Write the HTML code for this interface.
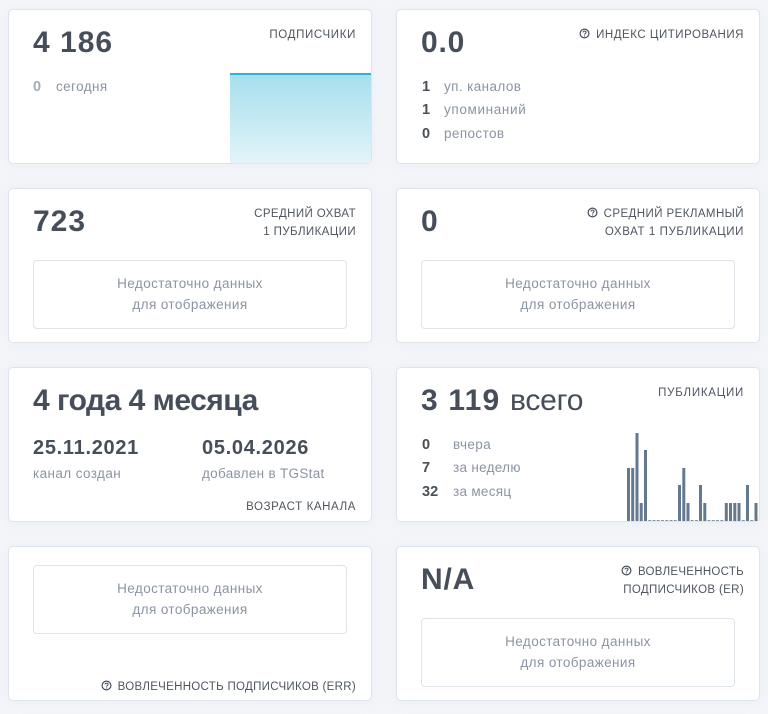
<!DOCTYPE html>
<html lang="ru"><head><meta charset="utf-8"><title>Статистика канала</title>
<style>
html,body{margin:0;padding:0;width:768px;height:714px;overflow:hidden;background:#f3f5f9}
body{position:relative;font-family:"Liberation Sans","DejaVu Sans",sans-serif;color:#495057}
.card{position:absolute;width:362px;height:153px;background:#fff;border:1px solid #dfe3ea;border-radius:5px;box-shadow:0 1px 12px rgba(200,208,225,.18)}
.t{position:absolute;white-space:nowrap;line-height:20px}
.big{font-size:30px;font-weight:700;line-height:36px;color:#464e59;letter-spacing:1px}
.lb{font-size:11.5px;color:#4f565f;letter-spacing:.5px;text-align:right;height:20px}
.n{font-size:14.5px;font-weight:700;color:#495057}
.g{font-size:13.5px;color:#8b94a3;letter-spacing:.4px}
.box{position:absolute;width:312px;height:67px;border:1px solid #dfe3ea;border-radius:4px;background:#fff;color:#8b94a3;font-size:13.5px;letter-spacing:.4px;line-height:21px;text-align:center}
.box div{position:relative;top:12px}
.q{position:absolute;width:11px;height:11px}
</style></head><body>

<div class="card" style="left:8px;top:9px"></div>
<div class="card" style="left:396px;top:9px"></div>
<div class="card" style="left:8px;top:188px"></div>
<div class="card" style="left:396px;top:188px"></div>
<div class="card" style="left:8px;top:367px"></div>
<div class="card" style="left:396px;top:367px"></div>
<div class="card" style="left:8px;top:546px"></div>
<div class="card" style="left:396px;top:546px"></div>

<!-- Card 1 -->
<div class="t big" style="left:33px;top:25px">4 186</div>
<div class="t lb" style="right:412px;top:25px;letter-spacing:.65px">ПОДПИСЧИКИ</div>
<div class="t n" style="left:33px;top:77px;color:#a3adb8">0</div>
<div class="t g" style="left:56px;top:77px">сегодня</div>
<div style="position:absolute;left:230px;top:73px;width:141px;height:90px;background:linear-gradient(#a6deed,#e2f4f9);border-bottom-right-radius:4px"><div style="height:2px;background:#2bb3d8"></div></div>

<!-- Card 2 -->
<div class="t big" style="left:421px;top:25px;letter-spacing:.8px">0.0</div>
<svg class="q" style="left:579px;top:28px" viewBox="0 0 11 11"><circle cx="5.5" cy="5.5" r="4.4" fill="none" stroke="#464e59" stroke-width="1.2"/><path d="M4 4.4c.2-1.8 3.1-1.7 3.1 0 0 1-1.5 1.1-1.5 2.2" fill="none" stroke="#464e59" stroke-width="1"/><circle cx="5.6" cy="8" r=".6" fill="#464e59"/></svg>
<div class="t lb" style="right:24px;top:25px;letter-spacing:.53px">ИНДЕКС ЦИТИРОВАНИЯ</div>
<div class="t n" style="left:422px;top:77px">1</div><div class="t g" style="left:444px;top:77px">уп. каналов</div>
<div class="t n" style="left:422px;top:100px">1</div><div class="t g" style="left:444px;top:100px;letter-spacing:.65px">упоминаний</div>
<div class="t n" style="left:422px;top:124px">0</div><div class="t g" style="left:444px;top:124px">репостов</div>

<!-- Card 3 -->
<div class="t big" style="left:33px;top:204px">723</div>
<div class="t lb" style="right:412px;top:204px;letter-spacing:.4px">СРЕДНИЙ ОХВАТ</div>
<div class="t lb" style="right:412px;top:222px;letter-spacing:.4px">1 ПУБЛИКАЦИИ</div>
<div class="box" style="left:33px;top:260px"><div>Недостаточно данных<br>для отображения</div></div>

<!-- Card 4 -->
<div class="t big" style="left:421px;top:204px">0</div>
<svg class="q" style="left:587px;top:207px" viewBox="0 0 11 11"><circle cx="5.5" cy="5.5" r="4.4" fill="none" stroke="#464e59" stroke-width="1.2"/><path d="M4 4.4c.2-1.8 3.1-1.7 3.1 0 0 1-1.5 1.1-1.5 2.2" fill="none" stroke="#464e59" stroke-width="1"/><circle cx="5.6" cy="8" r=".6" fill="#464e59"/></svg>
<div class="t lb" style="right:24px;top:204px;letter-spacing:.43px">СРЕДНИЙ РЕКЛАМНЫЙ</div>
<div class="t lb" style="right:24px;top:222px;letter-spacing:.6px">ОХВАТ 1 ПУБЛИКАЦИИ</div>
<div class="box" style="left:421px;top:260px"><div>Недостаточно данных<br>для отображения</div></div>

<!-- Card 5 -->
<div class="t big" style="left:33px;top:383px;letter-spacing:-.5px">4 года 4 месяца</div>
<div class="t" style="left:33px;top:438px;font-size:20px;font-weight:700;color:#464e59;letter-spacing:.7px">25.11.2021</div>
<div class="t" style="left:202px;top:438px;font-size:20px;font-weight:700;color:#464e59;letter-spacing:.7px">05.04.2026</div>
<div class="t g" style="left:33px;top:464px">канал создан</div>
<div class="t g" style="left:202px;top:464px;letter-spacing:.3px">добавлен в TGStat</div>
<div class="t lb" style="right:412px;top:497px;letter-spacing:.6px">ВОЗРАСТ КАНАЛА</div>

<!-- Card 6 -->
<div class="t big" style="left:421px;top:383px;letter-spacing:1.2px">3 119 <span style="font-weight:400;letter-spacing:-.2px">всего</span></div>
<div class="t lb" style="right:24px;top:383px;letter-spacing:.75px">ПУБЛИКАЦИИ</div>
<div class="t n" style="left:422px;top:435px">0</div><div class="t g" style="left:453px;top:435px">вчера</div>
<div class="t n" style="left:422px;top:458px">7</div><div class="t g" style="left:453px;top:458px;letter-spacing:.3px">за неделю</div>
<div class="t n" style="left:422px;top:482px">32</div><div class="t g" style="left:453px;top:482px;letter-spacing:.3px">за месяц</div>
<svg style="position:absolute;left:620px;top:425px" width="140" height="98" viewBox="0 0 140 98">
<g fill="#64798f">
<rect x="7" y="43" width="3" height="53"/><rect x="11.2" y="43" width="3" height="53"/><rect x="15.5" y="8" width="3" height="88"/><rect x="19.7" y="78" width="3" height="18"/><rect x="24" y="25" width="3" height="71"/>
<rect x="58" y="60" width="3" height="36"/><rect x="62.3" y="43" width="3" height="53"/><rect x="66.5" y="78" width="3" height="18"/>
<rect x="79" y="60" width="3" height="36"/><rect x="83.3" y="78" width="3" height="18"/>
<rect x="104.8" y="78" width="3" height="18"/><rect x="109" y="78" width="3" height="18"/><rect x="113.3" y="78" width="3" height="18"/><rect x="117.5" y="78" width="3" height="18"/>
<rect x="126" y="60" width="3" height="36"/><rect x="134.5" y="78" width="3" height="18"/>
</g>
<g fill="#8496a8">
<rect x="28.2" y="95" width="3" height="1"/><rect x="32.5" y="95" width="3" height="1"/><rect x="36.7" y="95" width="3" height="1"/><rect x="41" y="95" width="3" height="1"/><rect x="45.2" y="95" width="3" height="1"/><rect x="49.5" y="95" width="3" height="1"/><rect x="53.7" y="95" width="3" height="1"/>
<rect x="70.7" y="95" width="3" height="1"/><rect x="75" y="95" width="3" height="1"/>
<rect x="87.5" y="95" width="3" height="1"/><rect x="91.8" y="95" width="3" height="1"/><rect x="96" y="95" width="3" height="1"/><rect x="100.3" y="95" width="3" height="1"/>
<rect x="121.8" y="95" width="3" height="1"/><rect x="130.2" y="95" width="3" height="1"/>
</g>
</svg>

<!-- Card 7 -->
<div class="box" style="left:33px;top:565px"><div>Недостаточно данных<br>для отображения</div></div>
<svg class="q" style="left:101px;top:680px" viewBox="0 0 11 11"><circle cx="5.5" cy="5.5" r="4.4" fill="none" stroke="#464e59" stroke-width="1.2"/><path d="M4 4.4c.2-1.8 3.1-1.7 3.1 0 0 1-1.5 1.1-1.5 2.2" fill="none" stroke="#464e59" stroke-width="1"/><circle cx="5.6" cy="8" r=".6" fill="#464e59"/></svg>
<div class="t lb" style="right:412px;top:677px;letter-spacing:.3px">ВОВЛЕЧЕННОСТЬ ПОДПИСЧИКОВ (ERR)</div>

<!-- Card 8 -->
<div class="t big" style="left:421px;top:562px;letter-spacing:.8px">N/A</div>
<svg class="q" style="left:621px;top:565px" viewBox="0 0 11 11"><circle cx="5.5" cy="5.5" r="4.4" fill="none" stroke="#464e59" stroke-width="1.2"/><path d="M4 4.4c.2-1.8 3.1-1.7 3.1 0 0 1-1.5 1.1-1.5 2.2" fill="none" stroke="#464e59" stroke-width="1"/><circle cx="5.6" cy="8" r=".6" fill="#464e59"/></svg>
<div class="t lb" style="right:24px;top:562px;letter-spacing:.28px">ВОВЛЕЧЕННОСТЬ</div>
<div class="t lb" style="right:24px;top:580px;letter-spacing:.35px">ПОДПИСЧИКОВ (ER)</div>
<div class="box" style="left:421px;top:618px"><div>Недостаточно данных<br>для отображения</div></div>

</body></html>
